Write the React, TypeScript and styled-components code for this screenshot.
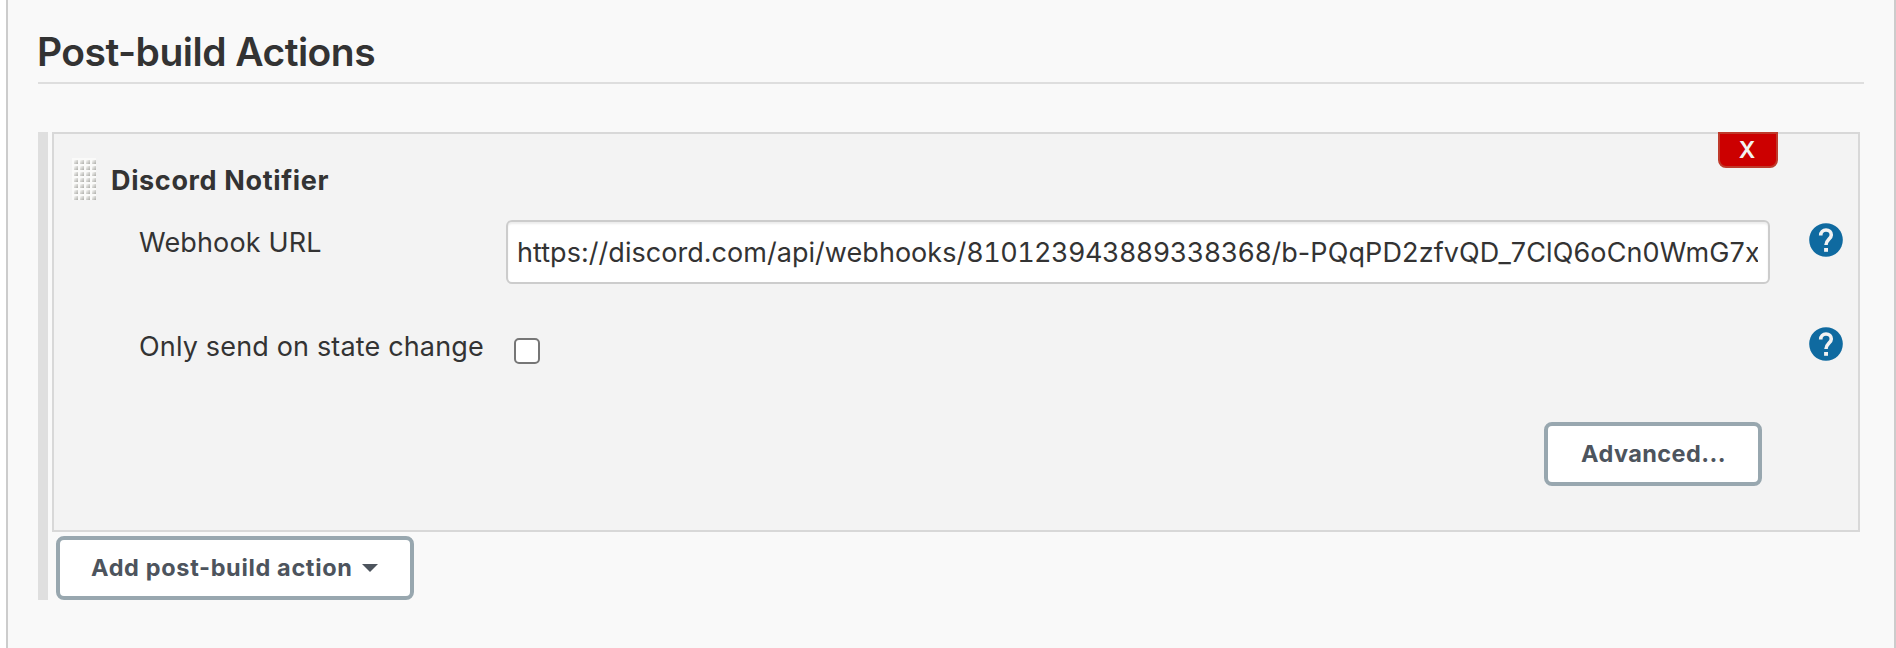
import React from "react";
import styled, { createGlobalStyle } from "styled-components";

const GlobalStyle = createGlobalStyle`
  *, *::before, *::after { box-sizing: border-box; }
  body {
    margin: 0;
    background: #fff;
    color: #333;
    font-family: Inter, "Liberation Sans", sans-serif;
  }
`;

const Page = styled.main`
  height: 648px;
  margin-left: 6px;
  padding: 30px 30px 0;
  overflow: hidden;
  background: #f9f9f9;
  border: solid #ccc;
  border-width: 0 2px;
`;

const SectionTitle = styled.h2`
  margin: 0;
  height: 54px;
  border-bottom: 2px solid #dedede;
  font-size: 39px;
  font-weight: 600;
  line-height: 44px;
  letter-spacing: -0.53px;
  text-indent: -1px;
`;

const ActionList = styled.section`
  display: flex;
  gap: 4px;
  margin: 48px 4px 0 0;
`;

const ListRail = styled.div`
  width: 10px;
  background: #dfdfdf;
`;

const ListBody = styled.div`
  flex: 1;
  min-width: 0;
`;

const ActionCard = styled.article`
  height: 400px;
  background: #f3f3f3;
  border: 2px solid #d8d8d8;
`;

const CardHeader = styled.header`
  display: flex;
  height: 84px;
  padding: 0 80px 0 18px;
`;

const DragHandle = styled.svg`
  display: block;
  width: 24px;
  height: 42px;
  margin-top: 24px;
  cursor: move;
`;

const CardTitle = styled.h3`
  flex: 1;
  margin: 29px 0 0 15px;
  font-size: 27px;
  font-weight: 700;
  line-height: 36px;
  letter-spacing: 0.64px;
`;

const DeleteButton = styled.button`
  width: 60px;
  height: 36px;
  margin-top: -2px;
  padding: 0;
  background: #c00;
  border: 2px solid #bf3a2b;
  border-radius: 0 0 8px 8px;
  color: #f2f2f2;
  font: 600 23px/32px Inter, sans-serif;
  text-indent: -2px;
`;

const FieldRow = styled.div`
  display: grid;
  grid-template-columns: 367px 1264px 1fr;
  height: 104px;
  padding-left: 85px;
`;

const FieldLabel = styled.label`
  padding-top: 7px;
  font-size: 27px;
  line-height: 36px;
  letter-spacing: 0.16px;
  white-space: nowrap;
`;

const TextBox = styled.div`
  height: 64px;
  margin-top: 2px;
  padding: 1px 10px 0 9px;
  background: #fff;
  border: 2px solid #ccc;
  border-radius: 6px;
  box-shadow: inset 0 2px 2px rgba(0, 0, 0, 0.075);
`;

const TextValue = styled.div`
  overflow: hidden;
  font-size: 27px;
  line-height: 59px;
  letter-spacing: 0.04px;
  white-space: nowrap;
`;

const WebhookId = styled.span`
  font-variant-numeric: tabular-nums;
  letter-spacing: -0.55px;
`;

const WebhookToken = styled.span`
  letter-spacing: 0.12px;
`;

const Checkbox = styled.input`
  appearance: none;
  width: 26px;
  height: 26px;
  margin: 16px 0 0 8px;
  background: #fff;
  border: 2px solid #767676;
  border-radius: 5px;
`;

const HelpLink = styled.a`
  height: 34px;
  margin: 5px 0 0 39px;
`;

const CardFooter = styled.footer`
  display: flex;
  justify-content: flex-end;
  padding: 0 96px 0 0;
  margin-top: -4px;
`;

const Button = styled.button<{ $width: number; $inset: number; $spacing: number }>`
  display: flex;
  align-items: center;
  width: ${(p) => p.$width}px;
  height: 64px;
  padding: 0 0 2px ${(p) => p.$inset}px;
  background: #fff;
  border: 4px solid #98a7af;
  border-radius: 8px;
  color: #4d545d;
  font-family: inherit;
  font-size: 23.5px;
  font-weight: 700;
  letter-spacing: ${(p) => p.$spacing}px;
  white-space: nowrap;
`;

const AddActionBar = styled.div`
  padding: 4px 0 0 4px;
`;

const Caret = styled.span`
  margin: 2px 0 0 9px;
  border: solid transparent;
  border-width: 8px 8px 0;
  border-top-color: #4d545d;
`;

const HANDLE_ROWS = [0, 1, 2, 3, 4, 5, 6];
const HANDLE_COLS = [0, 1, 2, 3];

function Handle() {
  return (
    <DragHandle viewBox="0 0 24 42" aria-hidden="true">
      <defs>
        <linearGradient id="dot" x1="0" y1="0" x2="1" y2="1">
          <stop offset="0.1" stopColor="#f4f4f2" />
          <stop offset="0.9" stopColor="#b4b4b0" />
        </linearGradient>
      </defs>
      <rect width="24" height="42" fill="#fafaf9" />
      {HANDLE_ROWS.map((r) =>
        HANDLE_COLS.map((c) => (
          <rect key={`${r}-${c}`} x={c * 6 + 2} y={r * 6 + 2} width="4" height="4" fill="url(#dot)" />
        ))
      )}
    </DragHandle>
  );
}

function Help() {
  return (
    <HelpLink aria-label="Help">
      <svg width="34" height="34" viewBox="0 0 34 34">
        <circle cx="17" cy="17" r="16.8" fill="#0f6aa0" />
        <path
          d="M11.7 12.4C11.7 9 14 7 17 7S22.3 9.1 22.3 12C22.3 15.8 17 16.4 17 22"
          fill="none"
          stroke="#f2f2f2"
          strokeWidth="3.6"
        />
        <rect x="15.1" y="25" width="3.9" height="3.8" fill="#f2f2f2" />
      </svg>
    </HelpLink>
  );
}

export default function App() {
  return (
    <>
      <GlobalStyle />
      <Page>
        <SectionTitle>Post-build Actions</SectionTitle>
        <ActionList>
          <ListRail />
          <ListBody>
            <ActionCard>
              <CardHeader>
                <Handle />
                <CardTitle>Discord Notifier</CardTitle>
                <DeleteButton>X</DeleteButton>
              </CardHeader>
              <FieldRow>
                <FieldLabel id="webhook-label">Webhook URL</FieldLabel>
                <TextBox role="textbox" aria-labelledby="webhook-label">
                  <TextValue>
                    https://discord.com/api/webhooks/<WebhookId>810123943889338368</WebhookId>/b-
                    <WebhookToken>PQqPD2zfvQD_7ClQ6oCn0WmG7x</WebhookToken>
                  </TextValue>
                </TextBox>
                <Help />
              </FieldRow>
              <FieldRow>
                <FieldLabel htmlFor="state">Only send on state change</FieldLabel>
                <Checkbox id="state" type="checkbox" />
                <Help />
              </FieldRow>
              <CardFooter>
                <Button $width={218} $inset={33} $spacing={0.42}>Advanced...</Button>
              </CardFooter>
            </ActionCard>
            <AddActionBar>
              <Button $width={358} $inset={31} $spacing={0.65}>
                Add post-build action
                <Caret />
              </Button>
            </AddActionBar>
          </ListBody>
        </ActionList>
      </Page>
    </>
  );
}
